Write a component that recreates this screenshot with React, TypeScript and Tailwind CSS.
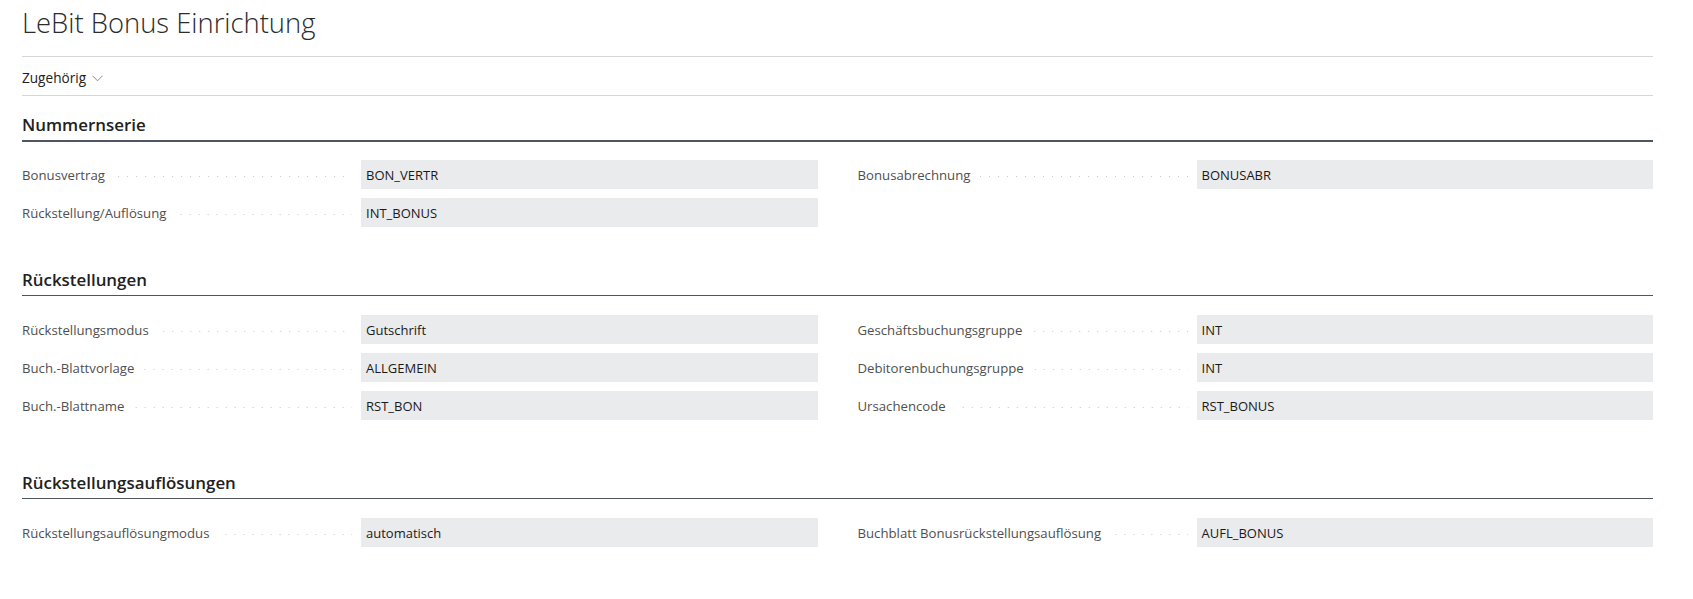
import React from "react";

type Field = { label: string; value: string } | null;

const font = { fontFamily: '"Open Sans", "Noto Sans", sans-serif' };

function Row({ f }: { f: Field }) {
  if (!f) return <div className="h-[29px]" />;
  return (
    <div className="flex h-[29px] items-center">
      <div className="flex w-[339px] shrink-0 items-center">
        <span className="whitespace-nowrap text-[13.2px] leading-[18px] text-[#4f4f4f]">{f.label}</span>
        <div className="ml-[10px] mr-[9px] mt-[3px] h-px flex-1 bg-[image:linear-gradient(to_right,#c4c4c4_1px,transparent_1px)] bg-[length:9px_1px] bg-right bg-repeat-x" />
      </div>
      <div className="flex h-[29px] flex-1 items-center bg-[#eaebec] pl-[5px] text-[13px] leading-[18px] text-[#1a1a1a]">
        {f.value}
      </div>
    </div>
  );
}

function Section({
  title,
  thick,
  mt,
  left,
  right,
}: {
  title: string;
  thick?: boolean;
  mt: string;
  left: Field[];
  right: Field[];
}) {
  return (
    <div className={mt}>
      <div
        className={
          "pb-[3px] text-[16.9px] font-semibold leading-[24px] text-[#212121] " +
          (thick ? "border-b-2 border-[#4b5566]" : "border-b border-[#4b5566]")
        }
      >
        {title}
      </div>
      <div className={"grid grid-cols-2 gap-x-[40px] " + (thick ? "mt-[18px]" : "mt-[19px]")}>
        <div className="flex flex-col gap-[9px]">
          {left.map((f, i) => (
            <Row key={i} f={f} />
          ))}
        </div>
        <div className="flex flex-col gap-[9px]">
          {right.map((f, i) => (
            <Row key={i} f={f} />
          ))}
        </div>
      </div>
    </div>
  );
}

export default function App() {
  return (
    <div className="h-[599px] w-[1693px] overflow-hidden bg-white pl-[22px] pr-[40px]" style={font}>
      <div className="border-b border-[#d6d6d6] pb-[15px] pt-[4px] text-[27.4px] font-light leading-[37px] text-[#2b2b2b]">
        LeBit Bonus Einrichtung
      </div>
      <div className="flex items-center border-b border-[#d6d6d6] pb-[7px] pt-[11px] text-[13.6px] leading-[20px] text-[#212121]">
        <span>Zugehörig</span>
        <svg className="ml-[6px] mt-[1px]" width="11" height="7" viewBox="0 0 11 7">
          <polyline points="0.5,0.8 5.5,5.8 10.5,0.8" fill="none" stroke="#8a8a8a" strokeWidth="1" />
        </svg>
      </div>
      <Section
        title="Nummernserie"
        thick
        mt="mt-[17px]"
        left={[
          { label: "Bonusvertrag", value: "BON_VERTR" },
          { label: "Rückstellung/Auflösung", value: "INT_BONUS" },
        ]}
        right={[{ label: "Bonusabrechnung", value: "BONUSABR" }]}
      />
      <Section
        title="Rückstellungen"
        mt="mt-[41px]"
        left={[
          { label: "Rückstellungsmodus", value: "Gutschrift" },
          { label: "Buch.-Blattvorlage", value: "ALLGEMEIN" },
          { label: "Buch.-Blattname", value: "RST_BON" },
        ]}
        right={[
          { label: "Geschäftsbuchungsgruppe", value: "INT" },
          { label: "Debitorenbuchungsgruppe", value: "INT" },
          { label: "Ursachencode", value: "RST_BONUS" },
        ]}
      />
      <Section
        title="Rückstellungsauflösungen"
        mt="mt-[51px]"
        left={[{ label: "Rückstellungsauflösungmodus", value: "automatisch" }]}
        right={[{ label: "Buchblatt Bonusrückstellungsauflösung", value: "AUFL_BONUS" }]}
      />
    </div>
  );
}
